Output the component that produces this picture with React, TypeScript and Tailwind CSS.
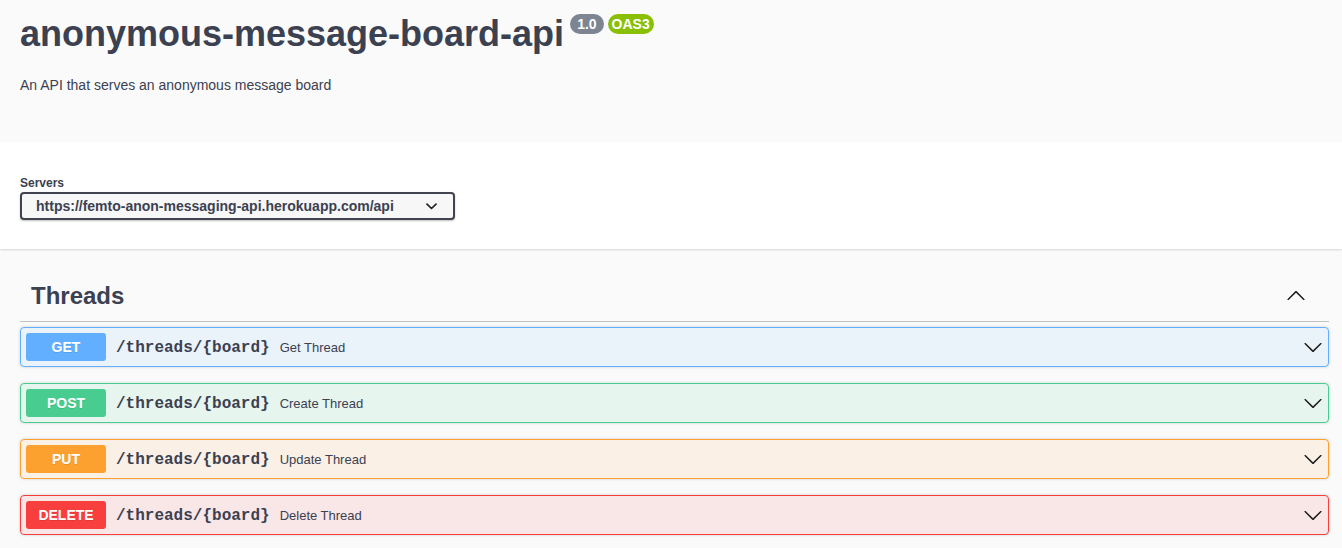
import React from "react";

const ArrowDown = () => (
  <svg width="20" height="20" viewBox="0 0 20 20" className="shrink-0" fill="#1a1a1a">
    <path d="M17.418 6.109c.272-.268.709-.268.979 0s.271.701 0 .969l-7.908 7.83c-.27.268-.707.268-.979 0l-7.908-7.83c-.27-.268-.27-.701 0-.969.271-.268.709-.268.979 0L10 13.25l7.418-7.141z" />
  </svg>
);

const ArrowUp = () => (
  <svg width="20" height="20" viewBox="0 0 20 20" className="shrink-0" fill="#1a1a1a">
    <path d="M 17.418 14.908 C 17.69 15.176 18.127 15.176 18.397 14.908 C 18.667 14.64 18.668 14.207 18.397 13.939 L 10.489 6.109 C 10.219 5.841 9.782 5.841 9.51 6.109 L 1.602 13.939 C 1.332 14.207 1.332 14.64 1.602 14.908 C 1.873 15.176 2.311 15.176 2.581 14.908 L 10 7.767 L 17.418 14.908 Z" />
  </svg>
);

type Op = { method: string; summary: string; border: string; bg: string; badge: string };

const ops: Op[] = [
  { method: "GET", summary: "Get Thread", border: "border-[#61affe]", bg: "bg-[#61affe]/10", badge: "bg-[#61affe]" },
  { method: "POST", summary: "Create Thread", border: "border-[#49cc90]", bg: "bg-[#49cc90]/10", badge: "bg-[#49cc90]" },
  { method: "PUT", summary: "Update Thread", border: "border-[#fca130]", bg: "bg-[#fca130]/10", badge: "bg-[#fca130]" },
  { method: "DELETE", summary: "Delete Thread", border: "border-[#f93e3e]", bg: "bg-[#f93e3e]/10", badge: "bg-[#f93e3e]" },
];

export default function App() {
  return (
    <div className="min-h-screen bg-[#fafafa] font-['Liberation_Sans',Arial,sans-serif] text-[#3b4151]">
      {/* Info */}
      <div className="h-[142px] pl-[20px] pr-[13px] pt-[14px]">
        <div className="flex items-start">
          <h2 className="mt-[2px] text-[36px] leading-[36px] font-bold">anonymous-message-board-api</h2>
          <span className="ml-[6px] h-[20px] rounded-full bg-[#7d8492] px-[7px] text-[14px] leading-[20px] font-bold text-white">
            1.0
          </span>
          <span className="ml-[4px] h-[20px] rounded-full bg-[#89bf04] px-[4px] text-[14px] leading-[20px] font-bold text-white">
            OAS3
          </span>
        </div>
        <p className="mt-[23px] text-[14px] leading-[20px]">An API that serves an anonymous message board</p>
      </div>

      {/* Servers */}
      <div className="bg-white pt-[34px] pb-[29px] pl-[20px] shadow-[0_1px_2px_0_rgba(0,0,0,0.15)]">
        <div className="block text-[12px] leading-[14px] font-bold">Servers</div>
        <div className="mt-[2px] flex h-[28px] w-[435px] items-center justify-between rounded-[4px] border-2 border-[#41444e] bg-[#f7f7f7] pl-[14px] pr-[16px] text-[14px] font-bold shadow-[0_1px_2px_0_rgba(0,0,0,0.25)]">
          <span>https://femto-anon-messaging-api.herokuapp.com/api</span>
          <svg width="11" height="7" viewBox="0 0 11 7" fill="none" stroke="#222" strokeWidth="1.7" strokeLinecap="round" strokeLinejoin="round">
            <polyline points="1,1.2 5.5,5.5 10,1.2" />
          </svg>
        </div>
      </div>

      {/* Tag section */}
      <div className="mt-[19px] pl-[20px] pr-[13px]">
        <div className="flex items-center justify-between border-b border-[#3b4151]/30 py-[10px] pl-[11px] pr-[23px]">
          <h3 className="pt-[2px] text-[24px] leading-[31px] font-bold">Threads</h3>
          <ArrowUp />
        </div>
        <div className="mt-[5px] flex flex-col gap-[16px]">
          {ops.map((op) => (
            <div
              key={op.method}
              className={`flex items-center rounded-[4px] border ${op.border} ${op.bg} p-[5px] shadow-[0_0_3px_rgba(0,0,0,0.19)]`}
            >
              <span
                className={`${op.badge} w-[80px] rounded-[3px] py-[6px] text-center text-[14px] leading-[16px] font-bold text-white [text-shadow:0_1px_0_rgba(0,0,0,0.1)]`}
              >
                {op.method}
              </span>
              <span className="px-[10px] pt-[1px] font-['Liberation_Mono','Courier_New',monospace] text-[16px] font-bold">
                /threads/{"{board}"}
              </span>
              <span className="flex-1 pt-[1px] text-[13px]">{op.summary}</span>
              <ArrowDown />
            </div>
          ))}
        </div>
      </div>
    </div>
  );
}
